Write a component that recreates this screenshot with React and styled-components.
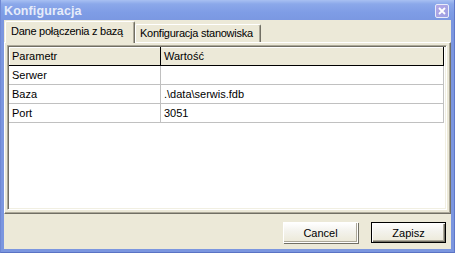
import React from 'react';
import styled, { createGlobalStyle } from 'styled-components';

const Global = createGlobalStyle`
  html, body { margin: 0; padding: 0; background: #fff; }
  body { font-family: "Liberation Sans", Arial, sans-serif; font-size: 11px; }
`;

const Window = styled.div`
  width: 455px;
  height: 253px;
  display: flex;
  flex-direction: column;
  background: #7b96df;
  box-sizing: border-box;
  border-left: 1px solid #6f88d4;
  border-right: 1px solid #5f78c8;
  border-bottom: 1px solid #5a73c4;
`;

const TitleBar = styled.div`
  height: 20px;
  display: flex;
  align-items: center;
  justify-content: space-between;
  padding: 0 3px 0 3px;
  background: linear-gradient(to bottom, #a8c0f2 0%, #8ba8ea 20%, #7f9de6 60%, #7b98e2 100%);
`;

const Title = styled.span`
  color: #e6ecfa;
  font-weight: bold;
  font-size: 12.5px;
  letter-spacing: 0.1px;
  margin-top: 1px;
`;

const CloseButton = styled.div`
  width: 12px;
  height: 12px;
  margin-top: 2px;
  margin-right: 2px;
  border: 1px solid #e8ecfa;
  border-radius: 2px;
  background: linear-gradient(135deg, #b4a8e6, #9b9ee2);
  display: flex;
  align-items: center;
  justify-content: center;
`;

const Body = styled.div`
  flex: 1;
  margin: 0 3px 3px 3px;
  background: #ece9d8;
  display: flex;
  flex-direction: column;
  padding-top: 1px;
`;

const TabStrip = styled.div`
  height: 21px;
  display: flex;
  align-items: flex-end;
  padding-left: 1px;
`;

const Tab = styled.div`
  box-sizing: border-box;
  height: ${p => (p.$active ? 22 : 18)}px;
  width: ${p => p.$w}px;
  padding: ${p => (p.$active ? '3px 0 0 5px' : '2px 0 0 4px')};
  background: #ece9d8;
  border-top: 1px solid #ffffff;
  border-left: 1px solid #ffffff;
  border-right: 1px solid #716f64;
  box-shadow: inset -1px 0 0 #aca899;
  border-radius: 2px 2px 0 0;
  position: relative;
  z-index: ${p => (p.$active ? 2 : 1)};
  margin-bottom: ${p => (p.$active ? '-1px' : '0')};
  color: #000;
  letter-spacing: -0.25px;
  white-space: nowrap;
`;

const Panel = styled.div`
  box-sizing: border-box;
  height: 172px;
  border-top: 1px solid #ffffff;
  border-left: 1px solid #ffffff;
  border-right: 1px solid #716f64;
  border-bottom: 1px solid #716f64;
  box-shadow: inset -1px -1px 0 #aca899;
  padding: 2px 3px 3px 2px;
  display: flex;
`;

const Grid = styled.div`
  flex: 1;
  background: #ffffff;
  border-top: 1px solid #aca899;
  border-left: 1px solid #aca899;
  border-right: 1px solid #ffffff;
  border-bottom: 1px solid #ffffff;
  box-shadow: inset 1px 1px 0 #716f64, inset -1px -1px 0 #f1efe2;
  padding: 1px 2px 2px 1px;
`;

const Row = styled.div`
  display: grid;
  grid-template-columns: 152px 1fr;
  height: 19px;
  box-sizing: border-box;
  border-bottom: 1px solid ${p => (p.$header ? '#000000' : '#c0c0c0')};
  background: ${p => (p.$header ? '#ece9d8' : '#ffffff')};
  box-shadow: ${p => (p.$header ? 'inset 0 1px 0 #ffffff, inset 1px 0 0 #ffffff' : 'none')};
  border-right: 1px solid ${p => (p.$header ? '#000000' : '#c0c0c0')};
`;

const Cell = styled.div`
  padding: 3px 0 0 3px;
  box-sizing: border-box;
  color: #000;
  border-right: ${p => (p.$first ? `1px solid ${p.$header ? '#000000' : '#c0c0c0'}` : 'none')};
  white-space: nowrap;
  overflow: hidden;
`;

const Footer = styled.div`
  flex: 1;
  display: flex;
  justify-content: flex-end;
  align-items: flex-start;
  gap: 13px;
  padding: 8px 5px 0 0;
`;

const Button = styled.div`
  box-sizing: border-box;
  width: 75px;
  height: 21px;
  display: flex;
  align-items: center;
  justify-content: center;
  color: #000;
  background: linear-gradient(to bottom, #ffffff 0%, #f4f3ee 40%, #ece9d8 100%);
  border: 1px solid ${p => (p.$default ? '#000000' : '#ffffff')};
  box-shadow: ${p =>
    p.$default
      ? 'inset 1px 1px 0 #ffffff, inset -1px -1px 0 #716f64, inset -2px -2px 0 #aca899'
      : 'inset -1px -1px 0 #aca899, 1px 1px 0 #716f64'};
`;

const rows = [
  ['Serwer', ''],
  ['Baza', '.\\data\\serwis.fdb'],
  ['Port', '3051'],
];

export default function App() {
  return (
    <>
      <Global />
      <Window>
        <TitleBar>
          <Title>Konfiguracja</Title>
          <CloseButton>
            <svg width="8" height="8" viewBox="0 0 8 8">
              <path d="M1 1 L7 7 M7 1 L1 7" stroke="#ffffff" strokeWidth="1.8" />
            </svg>
          </CloseButton>
        </TitleBar>
        <Body>
          <TabStrip>
            <Tab $active $w={130}>Dane połączenia z bazą</Tab>
            <Tab $w={126}>Konfiguracja stanowiska</Tab>
          </TabStrip>
          <Panel>
            <Grid>
              <Row $header>
                <Cell $first $header>Parametr</Cell>
                <Cell $header>Wartość</Cell>
              </Row>
              {rows.map(([k, v]) => (
                <Row key={k}>
                  <Cell $first>{k}</Cell>
                  <Cell>{v}</Cell>
                </Row>
              ))}
            </Grid>
          </Panel>
          <Footer>
            <Button>Cancel</Button>
            <Button $default>Zapisz</Button>
          </Footer>
        </Body>
      </Window>
    </>
  );
}
